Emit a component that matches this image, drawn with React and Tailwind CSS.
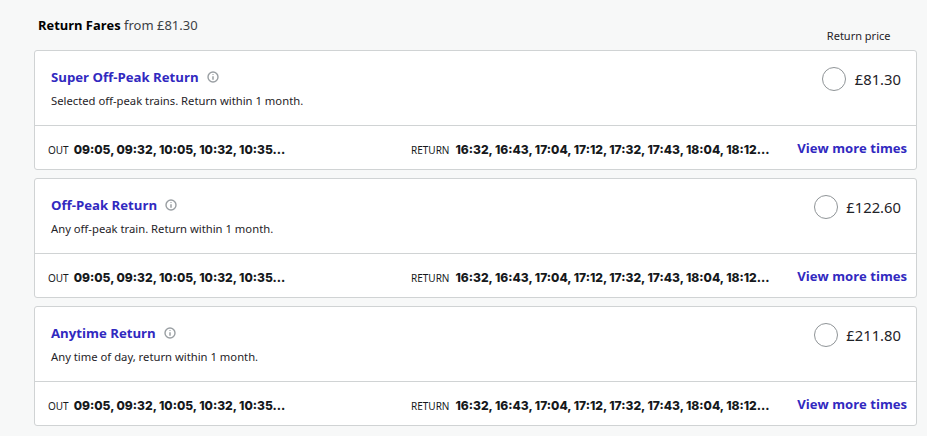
const out = "09:05, 09:32, 10:05, 10:32, 10:35...";
const ret = "16:32, 16:43, 17:04, 17:12, 17:32, 17:43, 18:04, 18:12...";
const fares = [
  { name: "Super Off-Peak Return", desc: "Selected off-peak trains. Return within 1 month.", price: "£81.30" },
  { name: "Off-Peak Return", desc: "Any off-peak train. Return within 1 month.", price: "£122.60" },
  { name: "Anytime Return", desc: "Any time of day, return within 1 month.", price: "£211.80" },
];

function Info() {
  return (
    <svg width="12" height="12" viewBox="0 0 12 12" fill="none" className="ml-[8px]">
      <circle cx="6" cy="6" r="5" stroke="#9a9fa3" strokeWidth="1.4" />
      <path d="M6 3.2v.9M6 5.2v3.5" stroke="#8d9296" strokeWidth="1.3" />
    </svg>
  );
}

function Card({ f }) {
  return (
    <div className="h-[120px] bg-white border border-[#d0d3d4] rounded-[3px] flex flex-col">
      <div className="h-[75px] border-b border-[#d0d3d4] flex justify-between pl-4 pr-[15px]">
        <div className="pt-[17px]">
          <div className="flex items-center h-[18px]">
            <span className="font-['Open_Sans'] text-[13.2px] font-bold text-[#3129c0] leading-[18px]">{f.name}</span>
            <Info />
          </div>
          <div className="mt-[8px] text-[11.25px] leading-[14px] text-[#1f2328]">{f.desc}</div>
        </div>
        <div className="flex items-center h-[24px] mt-[16px] gap-[8.5px]">
          <span className="w-6 h-6 rounded-full border border-[#8f9497] bg-white" />
          <span className="text-[14.8px] text-[#1f2328]">{f.price}</span>
        </div>
      </div>
      <div className="flex-1 flex items-center pl-[13px] pr-[9px] pt-[6px]">
        <div className="w-[363px] flex items-baseline gap-[5px] text-[#16191c]">
          <span className="text-[10px]">OUT</span>
          <span className="font-['Inter'] text-[12.05px] font-extrabold">{out}</span>
        </div>
        <div className="flex-1 flex items-baseline gap-[6px] text-[#16191c]">
          <span className="text-[10px]">RETURN</span>
          <span className="font-['Inter'] text-[12.05px] font-extrabold">{ret}</span>
        </div>
        <span className="font-['Open_Sans'] text-[13.1px] font-bold text-[#3129c0] -mt-[4px]">View more times</span>
      </div>
    </div>
  );
}

export default function App() {
  return (
    <div className="w-[927px] h-[436px] overflow-hidden bg-[#f7f8f8] pl-[34px] pr-[10px] font-['Noto_Sans',sans-serif]">
      <div className="flex justify-between h-[50px]">
        <div className="pl-[4px] pt-[16px] text-[13px] leading-[18px]">
          <span className="font-bold text-black font-['Open_Sans'] text-[12.9px]">Return Fares</span>{" "}
          <span className="text-[#3c4145]">from £81.30</span>
        </div>
        <div className="pt-[28px] pr-[26.5px] text-[11px] leading-[15px] text-[#1f2328]">Return price</div>
      </div>
      <div className="flex flex-col gap-2">
        {fares.map((f) => <Card key={f.name} f={f} />)}
      </div>
    </div>
  );
}
